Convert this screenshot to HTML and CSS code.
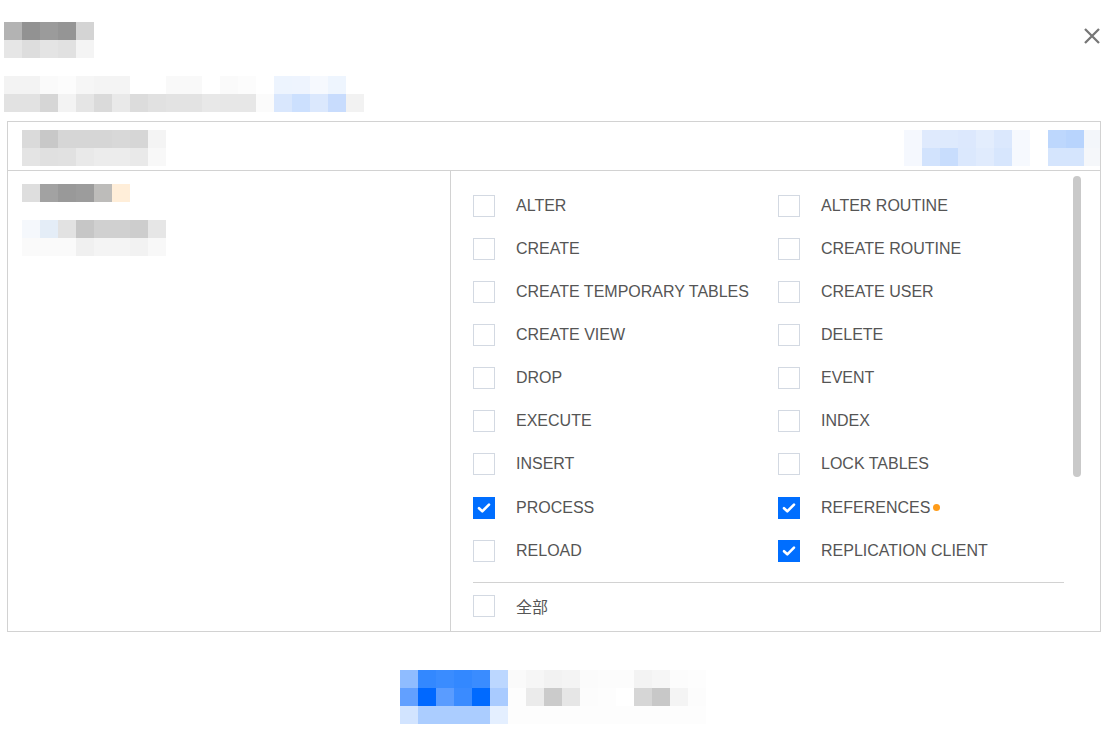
FILE: index.html
```html
<!DOCTYPE html>
<html lang="zh">
<head>
<meta charset="utf-8">
<title>权限设置</title>
<link rel="stylesheet" href="styles.css">
</head>
<body>
<div class="dialog">
  <div class="top">
    <svg class="mosaic" width="90" height="36" shape-rendering="crispEdges" aria-label="标题">
      <rect x="0" y="0" width="18" height="18" fill="#b3b3b3"/><rect x="18" y="0" width="18" height="18" fill="#929292"/><rect x="36" y="0" width="18" height="18" fill="#9b9b9b"/><rect x="54" y="0" width="18" height="18" fill="#959595"/><rect x="72" y="0" width="18" height="18" fill="#d4d4d4"/>
      <rect x="0" y="18" width="18" height="18" fill="#e6e6e6"/><rect x="18" y="18" width="18" height="18" fill="#dddddd"/><rect x="36" y="18" width="18" height="18" fill="#e4e4e4"/><rect x="54" y="18" width="18" height="18" fill="#e1e1e1"/><rect x="72" y="18" width="18" height="18" fill="#f4f4f4"/>
    </svg>
    <button class="close" type="button" aria-label="关闭">
      <svg width="18" height="18" viewBox="0 0 18 18"><path d="M2 2 L16 16 M16 2 L2 16" stroke="#777777" stroke-width="2.3" fill="none"/></svg>
    </button>
  </div>

  <div class="subtitle">
    <svg class="mosaic" width="360" height="36" shape-rendering="crispEdges">
      <rect x="0" y="0" width="18" height="18" fill="#f3f3f3"/><rect x="18" y="0" width="18" height="18" fill="#f3f3f3"/><rect x="36" y="0" width="18" height="18" fill="#fafafa"/><rect x="54" y="0" width="18" height="18" fill="#fcfcfc"/><rect x="72" y="0" width="18" height="18" fill="#f6f6f6"/><rect x="90" y="0" width="18" height="18" fill="#f4f4f4"/><rect x="108" y="0" width="18" height="18" fill="#f4f4f4"/><rect x="126" y="0" width="18" height="18" fill="#ffffff"/><rect x="144" y="0" width="18" height="18" fill="#ffffff"/><rect x="162" y="0" width="18" height="18" fill="#f9f9f9"/><rect x="180" y="0" width="18" height="18" fill="#f9f9f9"/><rect x="198" y="0" width="18" height="18" fill="#ffffff"/><rect x="216" y="0" width="18" height="18" fill="#fafafa"/><rect x="234" y="0" width="18" height="18" fill="#fcfcfc"/><rect x="252" y="0" width="18" height="18" fill="#ffffff"/><rect x="270" y="0" width="18" height="18" fill="#edf4fe"/><rect x="288" y="0" width="18" height="18" fill="#eef4fe"/><rect x="306" y="0" width="18" height="18" fill="#f6f9fe"/><rect x="324" y="0" width="18" height="18" fill="#eef5fe"/><rect x="342" y="0" width="18" height="18" fill="#ffffff"/>
      <rect x="0" y="18" width="18" height="18" fill="#e2e2e2"/><rect x="18" y="18" width="18" height="18" fill="#e2e2e2"/><rect x="36" y="18" width="18" height="18" fill="#d6d6d6"/><rect x="54" y="18" width="18" height="18" fill="#f3f3f3"/><rect x="72" y="18" width="18" height="18" fill="#e5e5e5"/><rect x="90" y="18" width="18" height="18" fill="#dadada"/><rect x="108" y="18" width="18" height="18" fill="#e9e9e9"/><rect x="126" y="18" width="18" height="18" fill="#dcdcdc"/><rect x="144" y="18" width="18" height="18" fill="#e1e1e1"/><rect x="162" y="18" width="18" height="18" fill="#e3e3e3"/><rect x="180" y="18" width="18" height="18" fill="#e3e3e3"/><rect x="198" y="18" width="18" height="18" fill="#e8e8e8"/><rect x="216" y="18" width="18" height="18" fill="#e7e7e7"/><rect x="234" y="18" width="18" height="18" fill="#e7e7e7"/><rect x="252" y="18" width="18" height="18" fill="#fbfbfb"/><rect x="270" y="18" width="18" height="18" fill="#d9e7fd"/><rect x="288" y="18" width="18" height="18" fill="#cce0fe"/><rect x="306" y="18" width="18" height="18" fill="#dbe8fd"/><rect x="324" y="18" width="18" height="18" fill="#c8dcfd"/><rect x="342" y="18" width="18" height="18" fill="#f2f2f2"/>
    </svg>
  </div>

  <div class="panel">
    <div class="panel-head">
      <svg class="mosaic" width="144" height="36" shape-rendering="crispEdges">
        <rect x="0" y="0" width="18" height="18" fill="#dadada"/><rect x="18" y="0" width="18" height="18" fill="#c8c8c8"/><rect x="36" y="0" width="18" height="18" fill="#d6d6d6"/><rect x="54" y="0" width="18" height="18" fill="#d6d6d6"/><rect x="72" y="0" width="18" height="18" fill="#d6d6d6"/><rect x="90" y="0" width="18" height="18" fill="#d8d8d8"/><rect x="108" y="0" width="18" height="18" fill="#d6d6d6"/><rect x="126" y="0" width="18" height="18" fill="#f4f4f4"/>
        <rect x="0" y="18" width="18" height="18" fill="#e4e4e4"/><rect x="18" y="18" width="18" height="18" fill="#e0e0e0"/><rect x="36" y="18" width="18" height="18" fill="#e1e1e1"/><rect x="54" y="18" width="18" height="18" fill="#e9e9e9"/><rect x="72" y="18" width="18" height="18" fill="#ececec"/><rect x="90" y="18" width="18" height="18" fill="#ececec"/><rect x="108" y="18" width="18" height="18" fill="#e9e9e9"/><rect x="126" y="18" width="18" height="18" fill="#f8f8f8"/>
      </svg>
      <svg class="mosaic" width="196" height="36" shape-rendering="crispEdges">
        <rect x="0" y="0" width="18" height="18" fill="#f5f8fe"/><rect x="18" y="0" width="18" height="18" fill="#dfeafd"/><rect x="36" y="0" width="18" height="18" fill="#deeafd"/><rect x="54" y="0" width="18" height="18" fill="#dce8fd"/><rect x="72" y="0" width="18" height="18" fill="#e3edfd"/><rect x="90" y="0" width="18" height="18" fill="#dbe8fd"/><rect x="108" y="0" width="18" height="18" fill="#f6f9fe"/><rect x="126" y="0" width="18" height="18" fill="#ffffff"/><rect x="144" y="0" width="18" height="18" fill="#bdd7fd"/><rect x="162" y="0" width="18" height="18" fill="#b8d4fd"/><rect x="180" y="0" width="16" height="18" fill="#f3f6fa"/>
        <rect x="0" y="18" width="18" height="18" fill="#f5f8fe"/><rect x="18" y="18" width="18" height="18" fill="#d2e3fd"/><rect x="36" y="18" width="18" height="18" fill="#c8ddfd"/><rect x="54" y="18" width="18" height="18" fill="#dbe8fd"/><rect x="72" y="18" width="18" height="18" fill="#e0ebfd"/><rect x="90" y="18" width="18" height="18" fill="#d7e6fd"/><rect x="108" y="18" width="18" height="18" fill="#f6f9fe"/><rect x="126" y="18" width="18" height="18" fill="#ffffff"/><rect x="144" y="18" width="18" height="18" fill="#d5e5fd"/><rect x="162" y="18" width="18" height="18" fill="#d5e5fd"/><rect x="180" y="18" width="16" height="18" fill="#f5f7fa"/>
      </svg>
    </div>

    <div class="panel-body">
      <div class="side">
        <svg class="mosaic" width="144" height="72" shape-rendering="crispEdges">
          <rect x="0" y="0" width="18" height="18" fill="#dedede"/><rect x="18" y="0" width="18" height="18" fill="#a2a2a2"/><rect x="36" y="0" width="18" height="18" fill="#999999"/><rect x="54" y="0" width="18" height="18" fill="#9c9c9c"/><rect x="72" y="0" width="18" height="18" fill="#bdbcba"/><rect x="90" y="0" width="18" height="18" fill="#ffeed9"/>
          <rect x="0" y="36" width="18" height="18" fill="#f5f8fc"/><rect x="18" y="36" width="18" height="18" fill="#e4edf7"/><rect x="36" y="36" width="18" height="18" fill="#e2e2e2"/><rect x="54" y="36" width="18" height="18" fill="#c6c6c6"/><rect x="72" y="36" width="18" height="18" fill="#d0d0d0"/><rect x="90" y="36" width="18" height="18" fill="#d0d0d0"/><rect x="108" y="36" width="18" height="18" fill="#cdcdcd"/><rect x="126" y="36" width="18" height="18" fill="#e6e6e6"/>
          <rect x="0" y="54" width="18" height="18" fill="#fafafa"/><rect x="18" y="54" width="18" height="18" fill="#fafafa"/><rect x="36" y="54" width="18" height="18" fill="#fafafa"/><rect x="54" y="54" width="18" height="18" fill="#f0f0f0"/><rect x="72" y="54" width="18" height="18" fill="#f4f4f4"/><rect x="90" y="54" width="18" height="18" fill="#f4f4f4"/><rect x="108" y="54" width="18" height="18" fill="#f2f2f2"/><rect x="126" y="54" width="18" height="18" fill="#f8f8f8"/>
        </svg>
      </div>

      <div class="perms">
        <div class="grid">
          <label class="opt"><span class="box"></span><span class="txt">ALTER</span></label>
          <label class="opt"><span class="box"></span><span class="txt">ALTER ROUTINE</span></label>
          <label class="opt"><span class="box"></span><span class="txt">CREATE</span></label>
          <label class="opt"><span class="box"></span><span class="txt">CREATE ROUTINE</span></label>
          <label class="opt"><span class="box"></span><span class="txt">CREATE TEMPORARY TABLES</span></label>
          <label class="opt"><span class="box"></span><span class="txt">CREATE USER</span></label>
          <label class="opt"><span class="box"></span><span class="txt">CREATE VIEW</span></label>
          <label class="opt"><span class="box"></span><span class="txt">DELETE</span></label>
          <label class="opt"><span class="box"></span><span class="txt">DROP</span></label>
          <label class="opt"><span class="box"></span><span class="txt">EVENT</span></label>
          <label class="opt"><span class="box"></span><span class="txt">EXECUTE</span></label>
          <label class="opt"><span class="box"></span><span class="txt">INDEX</span></label>
          <label class="opt"><span class="box"></span><span class="txt">INSERT</span></label>
          <label class="opt"><span class="box"></span><span class="txt">LOCK TABLES</span></label>
          <label class="opt"><span class="box checked"><svg width="22" height="22" viewBox="0 0 22 22"><path d="M6 11.2 L9.3 14.3 L16 7.6" stroke="#fff" stroke-width="2.6" fill="none" stroke-linecap="round" stroke-linejoin="round"/></svg></span><span class="txt">PROCESS</span></label>
          <label class="opt"><span class="box checked"><svg width="22" height="22" viewBox="0 0 22 22"><path d="M6 11.2 L9.3 14.3 L16 7.6" stroke="#fff" stroke-width="2.6" fill="none" stroke-linecap="round" stroke-linejoin="round"/></svg></span><span class="txt">REFERENCES</span><span class="dot"></span></label>
          <label class="opt"><span class="box"></span><span class="txt">RELOAD</span></label>
          <label class="opt"><span class="box checked"><svg width="22" height="22" viewBox="0 0 22 22"><path d="M6 11.2 L9.3 14.3 L16 7.6" stroke="#fff" stroke-width="2.6" fill="none" stroke-linecap="round" stroke-linejoin="round"/></svg></span><span class="txt">REPLICATION CLIENT</span></label>
        </div>
        <div class="divider"></div>
        <label class="opt all"><span class="box"></span><span class="txt">全部</span></label>
        <div class="thumb"></div>
      </div>
    </div>
  </div>

  <div class="footer">
    <svg class="mosaic" width="306" height="54" shape-rendering="crispEdges" aria-label="按钮">
      <rect x="0" y="0" width="18" height="18" fill="#8fbcff"/><rect x="18" y="0" width="18" height="18" fill="#3388ff"/><rect x="36" y="0" width="18" height="18" fill="#3a8cff"/><rect x="54" y="0" width="18" height="18" fill="#3388ff"/><rect x="72" y="0" width="18" height="18" fill="#3a8cff"/><rect x="90" y="0" width="18" height="18" fill="#bcd7ff"/><rect x="108" y="0" width="18" height="18" fill="#fafafa"/><rect x="126" y="0" width="18" height="18" fill="#f6f6f6"/><rect x="144" y="0" width="18" height="18" fill="#f2f2f2"/><rect x="162" y="0" width="18" height="18" fill="#f4f4f4"/><rect x="180" y="0" width="18" height="18" fill="#fbfbfb"/><rect x="198" y="0" width="18" height="18" fill="#fcfcfc"/><rect x="216" y="0" width="18" height="18" fill="#fcfcfc"/><rect x="234" y="0" width="18" height="18" fill="#f3f3f3"/><rect x="252" y="0" width="18" height="18" fill="#f6f6f6"/><rect x="270" y="0" width="18" height="18" fill="#fcfcfc"/><rect x="288" y="0" width="18" height="18" fill="#fdfdfd"/>
      <rect x="0" y="18" width="18" height="18" fill="#62a0ff"/><rect x="18" y="18" width="18" height="18" fill="#0068ff"/><rect x="36" y="18" width="18" height="18" fill="#5a9cff"/><rect x="54" y="18" width="18" height="18" fill="#3a8bff"/><rect x="72" y="18" width="18" height="18" fill="#006aff"/><rect x="90" y="18" width="18" height="18" fill="#a9cbff"/><rect x="108" y="18" width="18" height="18" fill="#fdfdfd"/><rect x="126" y="18" width="18" height="18" fill="#ebebeb"/><rect x="144" y="18" width="18" height="18" fill="#cbcbcb"/><rect x="162" y="18" width="18" height="18" fill="#e6e6e6"/><rect x="180" y="18" width="18" height="18" fill="#fcfcfc"/><rect x="198" y="18" width="18" height="18" fill="#fdfdfd"/><rect x="216" y="18" width="18" height="18" fill="#ffffff"/><rect x="234" y="18" width="18" height="18" fill="#d6d6d6"/><rect x="252" y="18" width="18" height="18" fill="#c8c8c8"/><rect x="270" y="18" width="18" height="18" fill="#f4f4f4"/><rect x="288" y="18" width="18" height="18" fill="#fcfcfc"/>
      <rect x="0" y="36" width="18" height="18" fill="#d2e4ff"/><rect x="18" y="36" width="18" height="18" fill="#abcdff"/><rect x="36" y="36" width="18" height="18" fill="#abcdff"/><rect x="54" y="36" width="18" height="18" fill="#abcdff"/><rect x="72" y="36" width="18" height="18" fill="#abcdff"/><rect x="90" y="36" width="18" height="18" fill="#e4efff"/><rect x="108" y="36" width="198" height="18" fill="#fdfdfd"/>
    </svg>
  </div>
</div>
</body>
</html>
```

FILE: styles.css
```css
* { box-sizing: border-box; }

html, body {
  margin: 0;
  background: #ffffff;
}

body {
  font-family: "Liberation Sans", Arial, "Noto Sans CJK SC", sans-serif;
  color: #555555;
  width: 1110px;
  height: 733px;
  overflow: hidden;
}

.mosaic { display: block; }

.top {
  display: flex;
  justify-content: space-between;
  align-items: flex-start;
  padding: 22px 9px 0 4px;
}

.close {
  margin-top: 5px;
  padding: 0;
  border: 0;
  background: none;
  width: 18px;
  height: 18px;
  cursor: pointer;
}

.close svg { display: block; }

.subtitle {
  margin-top: 18px;
  padding-left: 4px;
}

.panel {
  margin: 9px 9px 0 7px;
  border: 1px solid #d2d2d2;
}

.panel-head {
  height: 49px;
  border-bottom: 1px solid #d2d2d2;
  display: flex;
  justify-content: space-between;
  align-items: flex-start;
  padding: 8px 0 0 14px;
}

.panel-body {
  display: flex;
  height: 460px;
}

.side {
  width: 443px;
  border-right: 1px solid #d2d2d2;
  padding: 13px 0 0 14px;
}

.perms {
  position: relative;
  flex: 1;
  padding: 13px 0 0 22px;
}

.grid {
  display: grid;
  grid-template-columns: 305px 305px;
  grid-auto-rows: 43.15px;
}

.opt {
  display: flex;
  align-items: center;
  font-size: 16px;
  line-height: 20px;
  color: #555555;
  cursor: pointer;
}

.box {
  flex: none;
  width: 22px;
  height: 22px;
  border: 1px solid #d3d9e2;
  background: #fff;
  margin-right: 21px;
  display: flex;
  align-items: center;
  justify-content: center;
}

.box.checked {
  background: #006eff;
  border-color: #006eff;
}

.box svg { display: block; flex: none; }

.dot {
  width: 7px;
  height: 7px;
  border-radius: 50%;
  background: #ff9c19;
  margin-left: 3px;
}

.divider {
  width: 591px;
  height: 1px;
  background: #d2d2d2;
  margin-top: 10px;
}

.all {
  height: 43px;
  margin-top: 1px;
}

.all .txt {
  font-family: "Noto Sans CJK SC", "Liberation Sans", sans-serif;
  font-size: 16px;
}

.thumb {
  position: absolute;
  left: 622px;
  top: 5px;
  width: 8px;
  height: 301px;
  border-radius: 4px;
  background: #c9c9c9;
}

.footer {
  margin-top: 38px;
  padding-left: 400px;
}
```
